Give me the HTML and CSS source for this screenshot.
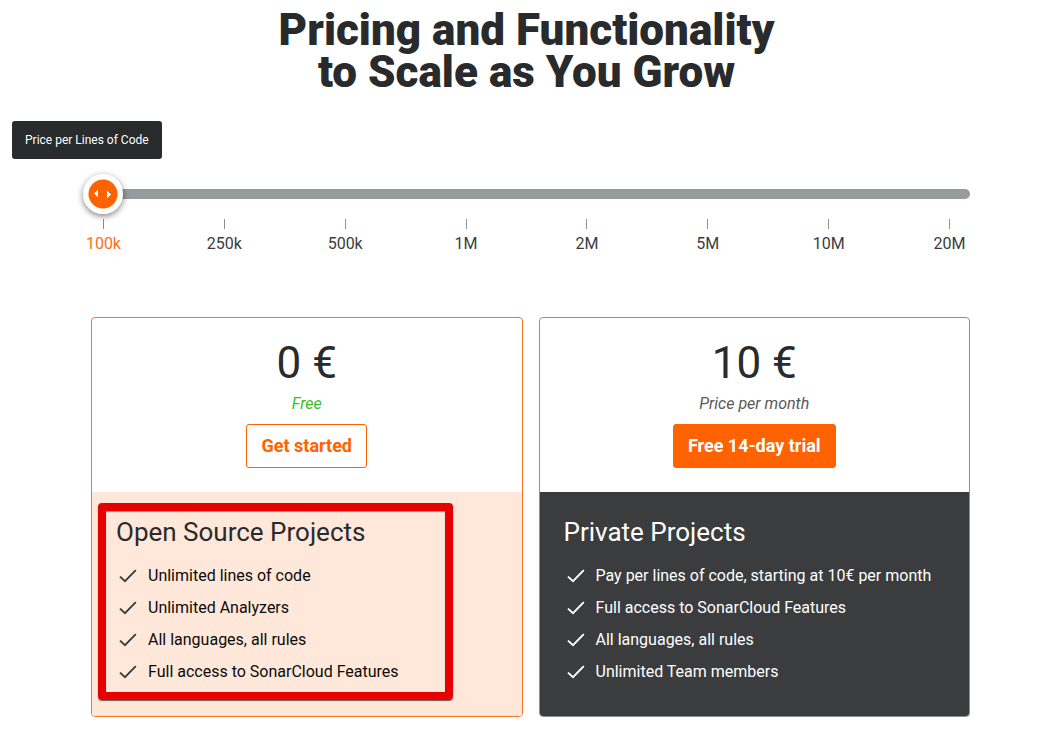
FILE: index.html
```html
<!DOCTYPE html>
<html lang="en">
<head>
<meta charset="utf-8">
<meta name="viewport" content="width=device-width, initial-scale=1">
<title>Pricing</title>
<link rel="stylesheet" href="styles.css">
</head>
<body>
<svg class="sprite" aria-hidden="true">
  <symbol id="check" viewBox="0 0 18 14"><path d="M1 7.6 L6 12.2 L16.8 1.2" fill="none" stroke="currentColor" stroke-width="1.9"/></symbol>
</svg>
<main class="pricing">
  <h1 class="title">Pricing and Functionality<br>to Scale as You Grow</h1>

  <section class="scale">
    <label class="scale-label" for="loc">Price per Lines of Code</label>
    <input class="slider" id="loc" type="range" min="0" max="7" step="1" value="0">
    <ol class="ticks">
      <li class="tick tick-active">100k</li>
      <li class="tick">250k</li>
      <li class="tick">500k</li>
      <li class="tick">1M</li>
      <li class="tick">2M</li>
      <li class="tick">5M</li>
      <li class="tick">10M</li>
      <li class="tick">20M</li>
    </ol>
  </section>

  <section class="plans">
    <article class="plan plan-open">
      <div class="offer">
        <p class="price">0 €</p>
        <p class="note note-free">Free</p>
        <button class="button button-outline" type="button">Get started</button>
      </div>
      <div class="details">
        <h2 class="plan-name">Open Source Projects</h2>
        <ul class="features">
          <li class="feature"><svg class="check" aria-hidden="true"><use href="#check"/></svg>Unlimited lines of code</li>
          <li class="feature"><svg class="check" aria-hidden="true"><use href="#check"/></svg>Unlimited Analyzers</li>
          <li class="feature"><svg class="check" aria-hidden="true"><use href="#check"/></svg>All languages, all rules</li>
          <li class="feature"><svg class="check" aria-hidden="true"><use href="#check"/></svg>Full access to SonarCloud Features</li>
        </ul>
        <div class="highlight"></div>
      </div>
    </article>

    <article class="plan plan-private">
      <div class="offer">
        <p class="price">10 €</p>
        <p class="note">Price per month</p>
        <button class="button button-solid" type="button">Free 14-day trial</button>
      </div>
      <div class="details">
        <h2 class="plan-name">Private Projects</h2>
        <ul class="features">
          <li class="feature"><svg class="check" aria-hidden="true"><use href="#check"/></svg>Pay per lines of code, starting at 10€ per month</li>
          <li class="feature"><svg class="check" aria-hidden="true"><use href="#check"/></svg>Full access to SonarCloud Features</li>
          <li class="feature"><svg class="check" aria-hidden="true"><use href="#check"/></svg>All languages, all rules</li>
          <li class="feature"><svg class="check" aria-hidden="true"><use href="#check"/></svg>Unlimited Team members</li>
        </ul>
      </div>
    </article>
  </section>
</main>
</body>
</html>
```

FILE: styles.css
```css
* {
  box-sizing: border-box;
}

body {
  margin: 0;
  background: #fff;
  color: #292a2c;
  font-family: Roboto, "Liberation Sans", sans-serif;
  font-size: 16px;
  line-height: 24px;
}

h1, h2, p, ul, ol {
  margin: 0;
  padding: 0;
}

ul, ol {
  list-style: none;
}

.sprite {
  display: none;
}

.pricing {
  padding: 9px 0 32px;
}

.title {
  padding-right: 8px;
  padding-left: 14px;
  font-size: 44px;
  font-weight: 900;
  line-height: 42px;
  text-align: center;
}

.scale {
  display: flex;
  flex-direction: column;
  margin-top: 28px;
}

.scale-label {
  align-self: flex-start;
  margin-left: 12px;
  padding: 7px 13px;
  border-radius: 3px;
  background: #292a2c;
  color: #fff;
  font-size: 12px;
  line-height: 24px;
}

.slider {
  height: 40px;
  margin: 15px 77px 0 83px;
  appearance: none;
  background: transparent;
  cursor: pointer;
}

.slider::-webkit-slider-runnable-track {
  height: 10px;
  border-radius: 5px;
  background: #969b9e;
}

/* Orange disc in a white ring, with a left and a right arrow */
.slider::-webkit-slider-thumb {
  width: 40px;
  height: 40px;
  margin-top: -15px;
  appearance: none;
  border-radius: 50%;
  background:
    linear-gradient(to bottom right, transparent 50%, #fff 50%) 11px 16px / 4px 4px no-repeat,
    linear-gradient(to top right, transparent 50%, #fff 50%) 11px 20px / 4px 4px no-repeat,
    linear-gradient(to bottom left, transparent 50%, #fff 50%) 24px 16px / 4px 4px no-repeat,
    linear-gradient(to top left, transparent 50%, #fff 50%) 24px 20px / 4px 4px no-repeat,
    radial-gradient(circle, #ff6200 14px, #fff 15px);
  box-shadow: 0 2px 6px rgba(0, 0, 0, 0.5);
}

.ticks {
  display: grid;
  grid-template-columns: repeat(8, 1fr);
  margin: 5px 37px 0 43px;
}

.tick {
  display: flex;
  flex-direction: column;
  align-items: center;
  gap: 3px;
  color: #3b3c3e;
}

.tick::before {
  width: 1px;
  height: 10px;
  background: #8d9193;
  content: "";
}

.tick-active {
  color: #ff6d1c;
}

.tick-active::before {
  background: #e86a25;
}

.plans {
  display: grid;
  grid-template-columns: 1fr 1fr;
  gap: 16px;
  margin: 61px 77px 0 91px;
}

.plan {
  display: flex;
  flex-direction: column;
  overflow: hidden;
  border: 1px solid #8d9193;
  border-radius: 4px;
}

.plan-open {
  border-color: #fa7328;
}

.offer {
  display: flex;
  flex-direction: column;
  align-items: center;
  padding: 21px 24px 24px;
}

.price {
  font-size: 44px;
  line-height: 48px;
}

.note {
  margin: 5px 0 8px;
  color: #58595b;
  font-style: italic;
}

.note-free {
  color: #36c026;
}

.button {
  height: 44px;
  padding: 0 14px;
  border: 1px solid #ff6200;
  border-radius: 3px;
  font-family: inherit;
  font-size: 18px;
  font-weight: 700;
  line-height: 24px;
  cursor: pointer;
}

.button-outline {
  background: #fff;
  color: #ff6200;
}

.button-solid {
  background: #ff6200;
  color: #fff;
}

.details {
  position: relative;
  flex: 1;
  padding: 24px 24px 28px;
}

.plan-open .details {
  background: #ffe7d9;
}

.plan-private .details {
  background: #3b3c3e;
  color: #fff;
}

.plan-name {
  font-size: 26px;
  font-weight: 400;
  line-height: 32px;
}

.features {
  padding: 12px 0 0 3px;
}

.feature {
  display: flex;
  align-items: center;
  gap: 11px;
  line-height: 32px;
}

.plan-open .feature {
  color: #0b0b0b;
}

.check {
  flex: none;
  width: 18px;
  height: 14px;
  color: #3b3c3e;
}

.plan-private .check {
  color: #fff;
}

.highlight {
  position: absolute;
  inset: 11px 69px 16px 6px;
  border: 8px solid #e60000;
  border-radius: 4px;
  box-shadow: 0 1px 1px rgba(0, 0, 0, 0.6), inset 0 1px 1px rgba(0, 0, 0, 0.4);
  pointer-events: none;
}
```
